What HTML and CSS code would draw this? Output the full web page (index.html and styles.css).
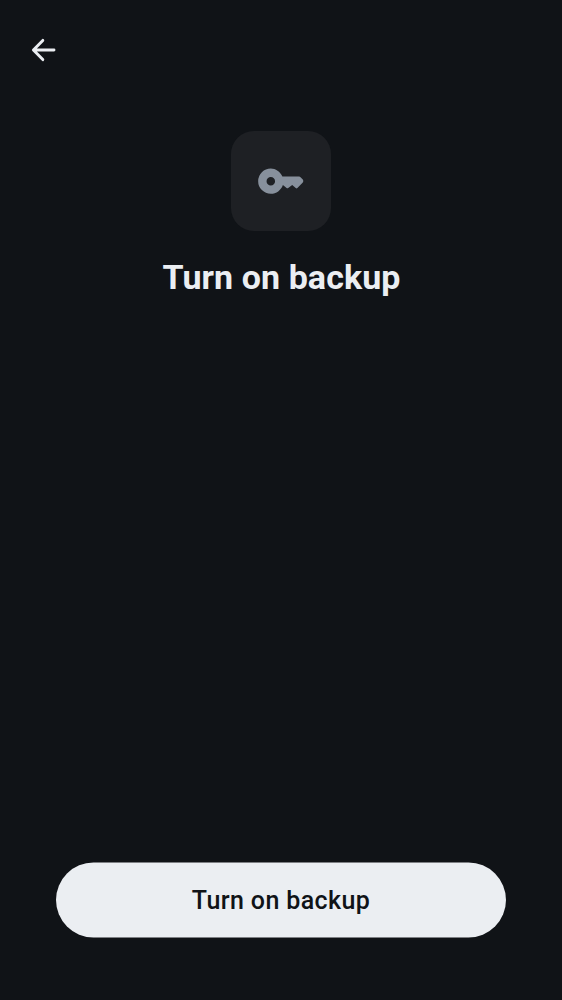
FILE: index.html
```html
<!DOCTYPE html>
<html lang="en">
<head>
<meta charset="utf-8">
<title>Turn on backup</title>
<link rel="stylesheet" href="styles.css">
</head>
<body>
<main class="screen">
  <header class="top-bar">
    <button class="back" aria-label="Back">
      <svg class="back-icon" viewBox="0 0 25 24" fill="none" stroke="currentColor" stroke-width="2.9" stroke-linecap="round" stroke-linejoin="round"><path d="M23 12H2.7M11.8 2.4L2.4 12l9.4 9.6"/></svg>
    </button>
  </header>
  <section class="hero">
    <div class="tile">
      <svg class="key-icon" viewBox="0 0 46 26" fill="currentColor"><path fill-rule="evenodd" d="M12.8 0.5C17.6 0.5 22.2 3.5 24.4 8.6H41Q42 8.6 42.8 9.4L44.8 11.6Q46 13.1 44.8 14.5L39.4 20Q38.5 20.8 37.7 20L34.2 17L30.2 20Q29.4 20.7 28.6 20L24.9 17C23 22.3 18.4 25.8 12.8 25.8A12.65 12.65 0 0 1 12.8 0.5ZM12.8 8.9A4.25 4.25 0 1 0 12.8 17.4A4.25 4.25 0 0 0 12.8 8.9Z"/></svg>
    </div>
    <h1 class="title">Turn on backup</h1>
  </section>
  <footer class="actions">
    <button class="primary">Turn on backup</button>
  </footer>
</main>
</body>
</html>
```
FILE: styles.css
```css
* { box-sizing: border-box; }
body { margin: 0; background: #101317; color: #ebeef2; font-family: Roboto, sans-serif; }
button { border: 0; padding: 0; font-family: inherit; }
.screen { display: flex; flex-direction: column; height: 1000px; padding: 0 56px 63px; }
.top-bar { height: 131px; padding-top: 38px; margin-left: -25px; }
.back { display: block; width: 25px; height: 24px; background: none; color: inherit; }
.back-icon { display: block; width: 25px; height: 24px; }
.hero { display: flex; flex: 1; flex-direction: column; align-items: center; }
.tile { display: grid; place-items: center; width: 100px; height: 100px; border-radius: 23px; background: #1e2024; }
.key-icon { width: 46px; height: 26px; color: #87909c; }
.title { margin: 26px 0 0; padding-left: 1px; font-size: 34px; font-weight: 700; line-height: 40px; letter-spacing: 0.08px; white-space: nowrap; }
.primary { display: block; width: 100%; height: 75px; border-radius: 38px; background: #ebeef2; color: #101317; font-size: 25px; font-weight: 500; letter-spacing: 0.38px; transform: translateY(0.5px); }
```
